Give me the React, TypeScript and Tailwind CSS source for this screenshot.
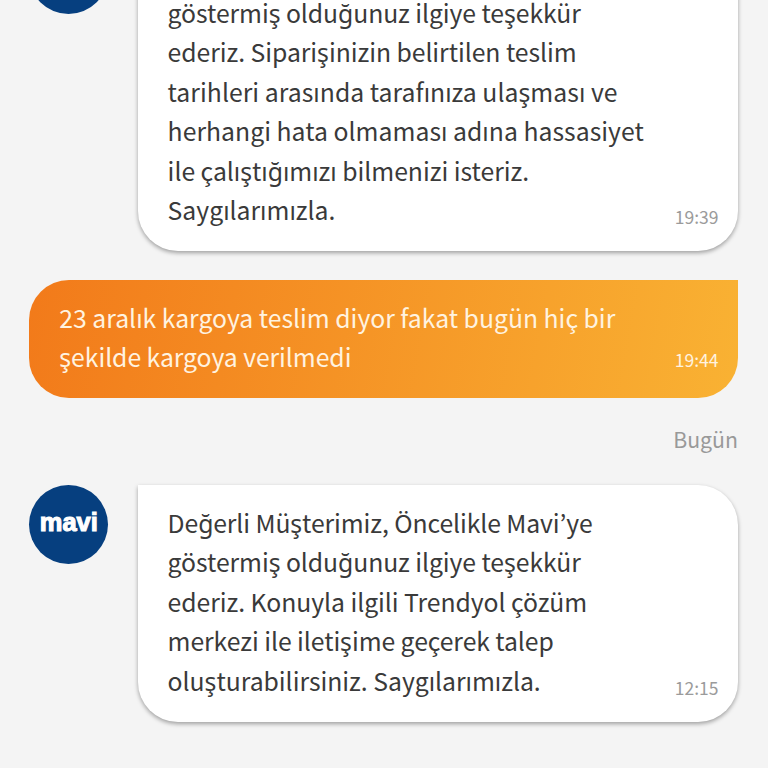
import clsx from "clsx";

type Line = { text: string; tracking?: number };

type Message = {
  id: number;
  mine?: boolean;
  continued?: boolean;
  lines: Line[];
  time: string;
};

const earlier: Message[] = [
  {
    id: 1,
    continued: true,
    lines: [
      { text: "göstermiş olduğunuz ilgiye teşekkür", tracking: -0.07 },
      { text: "ederiz. Siparişinizin belirtilen teslim", tracking: -0.05 },
      { text: "tarihleri arasında tarafınıza ulaşması ve", tracking: 0.04 },
      { text: "herhangi hata olmaması adına hassasiyet", tracking: 0.03 },
      { text: "ile çalıştığımızı bilmenizi isteriz.", tracking: -0.02 },
      { text: "Saygılarımızla." },
    ],
    time: "19:39",
  },
  {
    id: 2,
    mine: true,
    lines: [
      { text: "23 aralık kargoya teslim diyor fakat bugün hiç bir" },
      { text: "şekilde kargoya verilmedi", tracking: -0.05 },
    ],
    time: "19:44",
  },
];

const today: Message[] = [
  {
    id: 3,
    lines: [
      { text: "Değerli Müşterimiz, Öncelikle Mavi’ye", tracking: -0.1 },
      { text: "göstermiş olduğunuz ilgiye teşekkür", tracking: -0.07 },
      { text: "ederiz. Konuyla ilgili Trendyol çözüm", tracking: -0.05 },
      { text: "merkezi ile iletişime geçerek talep", tracking: -0.07 },
      { text: "oluşturabilirsiniz. Saygılarımızla.", tracking: -0.02 },
    ],
    time: "12:15",
  },
];

const Avatar = ({ blank }: { blank?: boolean }) => (
  <div className={clsx("size-[79px] shrink-0 rounded-full bg-[#063f7f]", blank && "-mt-[58px]")}>
    {!blank && (
      <svg viewBox="0 0 79 79" className="size-full" aria-label="mavi">
        <text
          x="10.8"
          y="45.8"
          textLength="58"
          lengthAdjust="spacingAndGlyphs"
          fill="#fff"
          stroke="#fff"
          strokeWidth="1.1"
          fontFamily="'Liberation Sans', sans-serif"
          fontWeight="700"
          fontSize="25"
        >
          mavi
        </text>
      </svg>
    )}
  </div>
);

const Bubble = ({ message }: { message: Message }) => (
  <div
    className={clsx(
      "flex min-w-0 flex-1 items-end justify-between pr-[19.5px] pl-[30px]",
      message.continued ? "rounded-b-[40px] pb-[21.5px]" : "rounded-[40px] pt-[18px] pb-[21.5px]",
      message.mine
        ? "rounded-tr-none bg-linear-[100deg,#f27a1a,#f9b233] text-[#fff3e0]"
        : "rounded-tl-none bg-white text-[#3a3a3a] shadow-[0_2px_4px_rgba(0,0,0,0.35)]"
    )}
  >
    <div className="text-[24.75px] leading-[39.4px] whitespace-nowrap">
      {message.lines.map((line) => (
        <p key={line.text} style={{ letterSpacing: line.tracking }}>
          {line.text}
        </p>
      ))}
    </div>
    <time
      className={clsx(
        "text-[17.5px] leading-[27px]",
        message.mine ? "mb-[4px]" : "-mb-[0.5px] text-[#9b9b9b]"
      )}
    >
      {message.time}
    </time>
  </div>
);

const Row = ({ message }: { message: Message }) => (
  <div className="flex items-start gap-[29.3px]">
    {!message.mine && <Avatar blank={message.continued} />}
    <Bubble message={message} />
  </div>
);

export default function App() {
  return (
    <main className="h-[768px] overflow-hidden bg-[#f4f4f4] pr-[30px] pl-[29.3px] font-['Noto_Sans_CJK_KR','Noto_Sans',sans-serif]">
      <div className="-mt-[7.1px] flex flex-col gap-[29.2px]">
        {earlier.map((m) => (
          <Row key={m.id} message={m} />
        ))}
      </div>
      <p className="mt-[24px] mb-[28.7px] text-right text-[21.3px] leading-[34px] text-[#999]">Bugün</p>
      {today.map((m) => (
        <Row key={m.id} message={m} />
      ))}
    </main>
  );
}
